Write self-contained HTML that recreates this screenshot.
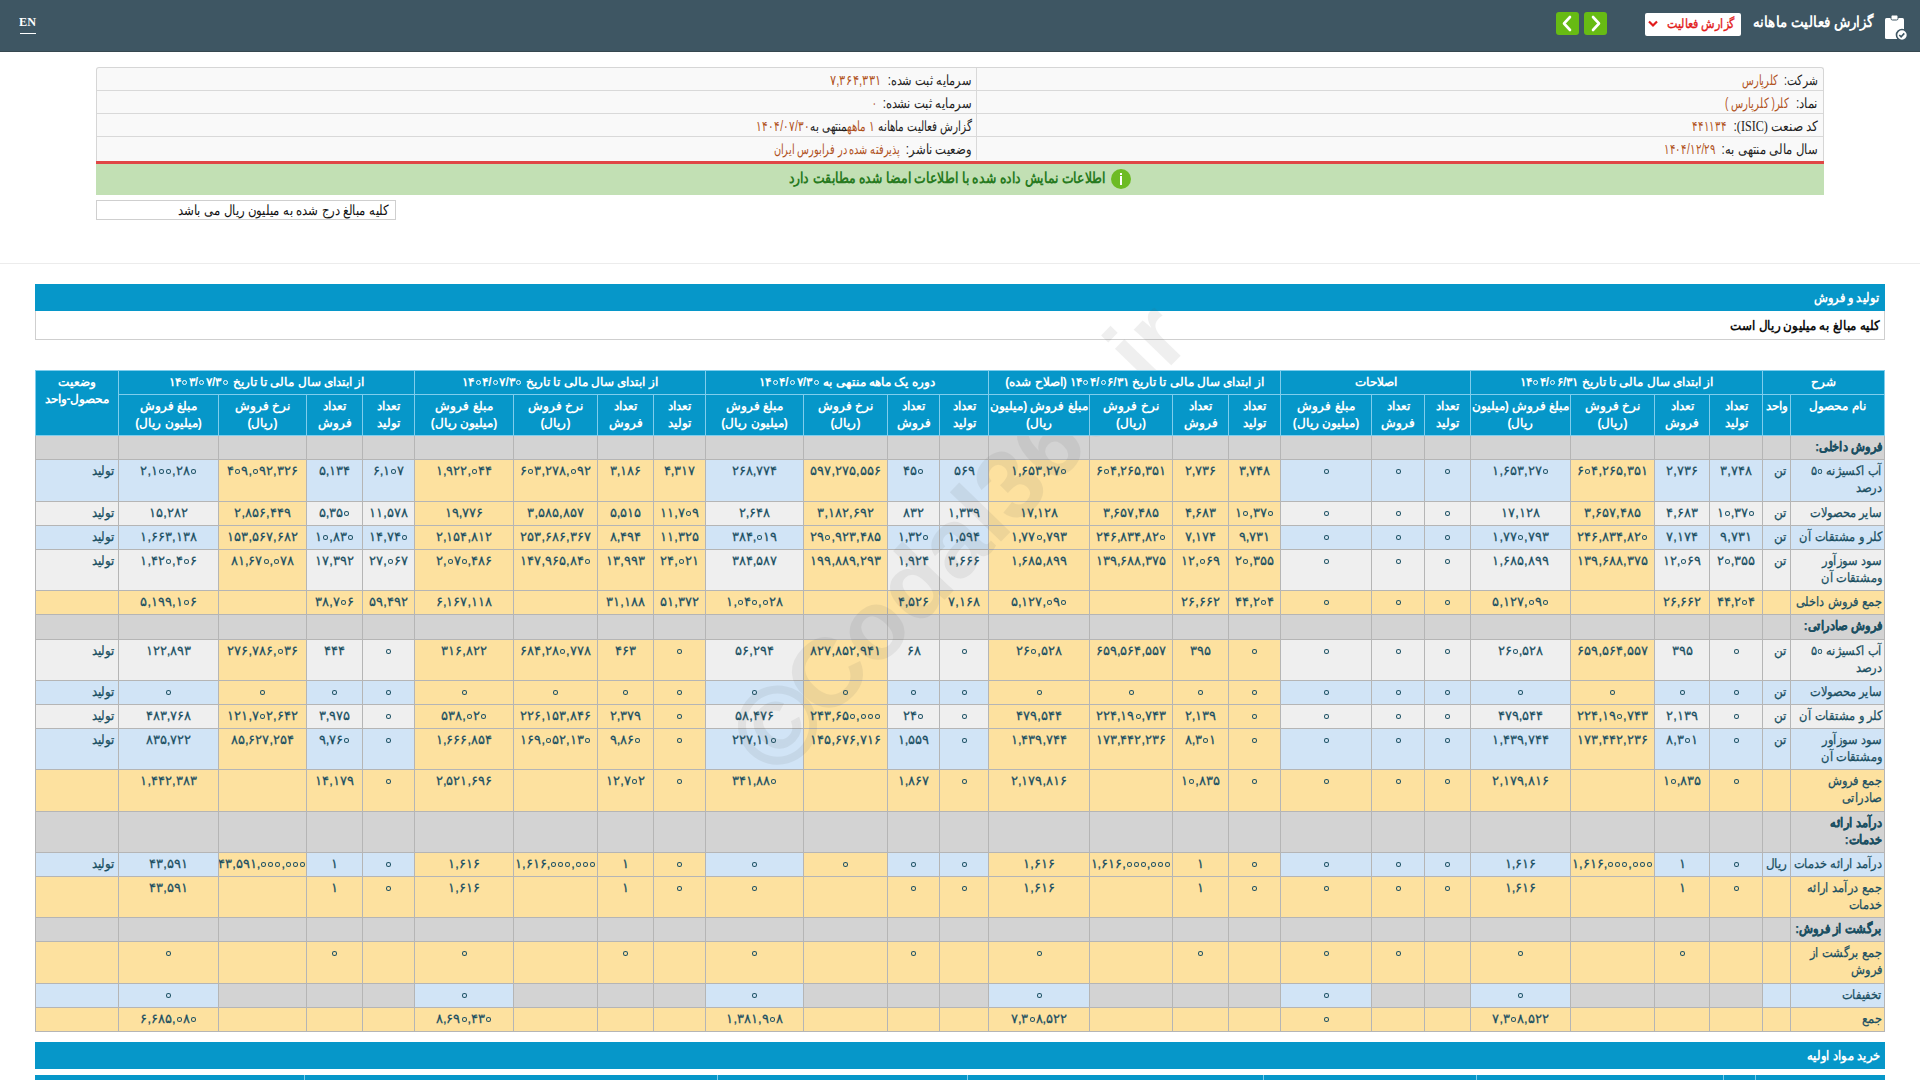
<!DOCTYPE html>
<html><head><meta charset="utf-8"><style>
html,body{margin:0;padding:0}
body{width:1920px;height:1080px;overflow:hidden;position:relative;background:#fff;font-family:"Liberation Sans",sans-serif;}
div{position:absolute;box-sizing:border-box}
#tb div{border:1px solid #b5b5b5}
.t{position:absolute;left:0;right:0;top:2px;line-height:17px;font-size:13px;color:#1a4f62;text-align:center;direction:rtl;white-space:nowrap;letter-spacing:0.4px;-webkit-text-stroke:0.25px #1a4f62}
.z{display:inline-block;box-sizing:border-box;width:5px;height:4.5px;border:1.4px solid #1a4f62;border-radius:50%;vertical-align:1.5px;margin:0 1px}
.n{direction:ltr;unicode-bidi:isolate;display:inline-block}
.nm{text-align:right;right:2px;left:-20px;letter-spacing:0;transform-origin:100% 0;transform:scaleX(0.88)}
.st{text-align:right;right:3px;transform-origin:100% 0;transform:scaleX(0.9)}
.b{font-weight:bold}
.un{text-align:right;right:3px;left:-5px;letter-spacing:0;transform-origin:100% 0;transform:scaleX(0.92)}
.zw{border-color:#fff;border-width:1.6px;width:5px;height:5px;margin:0 1.5px;vertical-align:1px}
#hd div{border:1px solid #7fcdec;background:#0697c9}
.h{position:absolute;left:0;right:0;color:#fff;font-weight:bold;font-size:12px;line-height:17px;text-align:center;direction:rtl}
</style></head><body>

<div style="left:0;top:0;width:1920px;height:52px;background:#3e5663;border-bottom:1px solid #364850"></div>
<div style="right:1884px;top:14px;font-size:13px;font-weight:bold;color:#fff;line-height:16px;white-space:nowrap;font-family:'Liberation Serif',serif;transform-origin:100% 50%;transform:scaleX(0.9392);"><span id="en">EN</span></div>
<div style="left:20px;top:33px;width:16px;height:1px;background:#fff"></div>
<div style="right:47px;top:12px;font-size:15px;font-weight:bold;color:#fff;line-height:20px;white-space:nowrap;direction:rtl;transform-origin:100% 50%;transform:scaleX(0.8935);"><span id="title">گزارش فعالیت ماهانه</span></div>
<svg style="position:absolute;left:1883px;top:13px" width="26" height="28" viewBox="0 0 26 28">
<rect x="2" y="5" width="19" height="21" rx="1.5" fill="#fff"/>
<rect x="8" y="2" width="7" height="5" rx="1.5" fill="#fff" stroke="#3e5663" stroke-width="1"/>
<circle cx="19" cy="22" r="5.5" fill="#fff" stroke="#3e5663" stroke-width="1.6"/>
<path d="M16.3 22 l1.8 1.8 l3.2 -3.4" fill="none" stroke="#3e5663" stroke-width="1.6"/>
</svg>
<div style="left:1645px;top:13px;width:96px;height:23px;background:#fff;border-radius:2px"></div>
<div style="right:185px;top:15px;font-size:13px;font-weight:normal;color:#e21b1b;line-height:18px;white-space:nowrap;direction:rtl;transform-origin:100% 50%;transform:scaleX(0.8543);-webkit-text-stroke:0.35px #e21b1b"><span id="sel">گزارش فعالیت</span></div>
<svg style="position:absolute;left:1648px;top:20px" width="10" height="8" viewBox="0 0 10 8"><path d="M1 1.5 L5 5.5 L9 1.5" fill="none" stroke="#e21b1b" stroke-width="2.2"/></svg>
<svg style="position:absolute;left:1556px;top:12px" width="23" height="23" viewBox="0 0 23 23"><rect width="23" height="23" rx="3" fill="#67bb14"/><path d="M14 5 L8 11.5 L14 18" fill="none" stroke="#fff" stroke-width="2.6" stroke-linecap="round" stroke-linejoin="round"/></svg>
<svg style="position:absolute;left:1584px;top:12px" width="23" height="23" viewBox="0 0 23 23"><rect width="23" height="23" rx="3" fill="#67bb14"/><path d="M9 5 L15 11.5 L9 18" fill="none" stroke="#fff" stroke-width="2.6" stroke-linecap="round" stroke-linejoin="round"/></svg>
<div style="left:96px;top:67px;width:1728px;height:94px;background:#f9f9f9;border:1px solid #d6d6d6;border-bottom:none;border-radius:3px 3px 0 0"></div>
<div style="left:97px;top:90px;width:1726px;height:1px;background:#d9d9d9"></div>
<div style="left:97px;top:113px;width:1726px;height:1px;background:#d9d9d9"></div>
<div style="left:97px;top:136px;width:1726px;height:1px;background:#d9d9d9"></div>
<div style="left:976px;top:68px;width:1px;height:92px;background:#d9d9d9"></div>
<div style="right:102px;top:70px;font-size:14px;font-weight:normal;color:#222;line-height:20px;white-space:nowrap;direction:rtl;transform-origin:100% 50%;transform:scaleX(0.7572);"><span id="r0l">شرکت:</span></div>
<div style="right:142px;top:70px;font-size:14px;font-weight:normal;color:#b0521c;line-height:20px;white-space:nowrap;direction:rtl;transform-origin:100% 50%;transform:scaleX(0.6923);"><span id="r0v">کلرپارس</span></div>
<div style="right:102px;top:93px;font-size:14px;font-weight:normal;color:#222;line-height:20px;white-space:nowrap;direction:rtl;transform-origin:100% 50%;transform:scaleX(0.8494);"><span id="r1l">نماد:</span></div>
<div style="right:131px;top:93px;font-size:14px;font-weight:normal;color:#b0521c;line-height:20px;white-space:nowrap;direction:rtl;transform-origin:100% 50%;transform:scaleX(0.7183);"><span id="r1v">کلر( کلرپارس )</span></div>
<div style="right:102px;top:116px;font-size:14px;font-weight:normal;color:#222;line-height:20px;white-space:nowrap;direction:rtl;transform-origin:100% 50%;transform:scaleX(0.8629);"><span id="r2l">کد صنعت <span style="font-family:Liberation Serif,serif">(ISIC)</span>:</span></div>
<div style="right:193px;top:116px;font-size:14px;font-weight:normal;color:#b0521c;line-height:20px;white-space:nowrap;direction:rtl;transform-origin:100% 50%;transform:scaleX(0.7292);"><span id="r2v">۴۴۱۱۳۴</span></div>
<div style="right:102px;top:139px;font-size:14px;font-weight:normal;color:#222;line-height:20px;white-space:nowrap;direction:rtl;transform-origin:100% 50%;transform:scaleX(0.8304);"><span id="r3l">سال مالی منتهی به:</span></div>
<div style="right:204px;top:139px;font-size:14px;font-weight:normal;color:#b0521c;line-height:20px;white-space:nowrap;direction:rtl;transform-origin:100% 50%;transform:scaleX(0.7242);"><span id="r3v">۱۴۰۴/۱۲/۲۹</span></div>
<div style="right:948px;top:70px;font-size:14px;font-weight:normal;color:#222;line-height:20px;white-space:nowrap;direction:rtl;transform-origin:100% 50%;transform:scaleX(0.8100);"><span id="l0l">سرمایه ثبت شده:</span></div>
<div style="right:1038px;top:70px;font-size:14px;font-weight:normal;color:#b0521c;line-height:20px;white-space:nowrap;direction:rtl;transform-origin:100% 50%;transform:scaleX(0.8150);"><span id="l0v">۷,۳۶۴,۳۳۱</span></div>
<div style="right:948px;top:93px;font-size:14px;font-weight:normal;color:#222;line-height:20px;white-space:nowrap;direction:rtl;transform-origin:100% 50%;transform:scaleX(0.8264);"><span id="l1l">سرمایه ثبت نشده:</span></div>
<div style="right:1043px;top:93px;font-size:14px;font-weight:normal;color:#b0521c;line-height:20px;white-space:nowrap;direction:rtl;transform-origin:100% 50%;transform:scaleX(0.6250);"><span id="l1v">۰</span></div>
<div style="right:948px;top:139px;font-size:14px;font-weight:normal;color:#222;line-height:20px;white-space:nowrap;direction:rtl;transform-origin:100% 50%;transform:scaleX(0.8271);"><span id="l3l">وضعیت ناشر:</span></div>
<div style="right:1020px;top:139px;font-size:14px;font-weight:normal;color:#b0521c;line-height:20px;white-space:nowrap;direction:rtl;transform-origin:100% 50%;transform:scaleX(0.6977);"><span id="l3v">پذیرفته شده در فرابورس ایران</span></div>
<div style="right:948px;top:116px;font-size:14px;font-weight:normal;color:#222;line-height:20px;white-space:nowrap;direction:rtl;transform-origin:100% 50%;transform:scaleX(0.7495);"><span id="l2">گزارش فعالیت ماهانه <span style="color:#b0521c">۱ ماهه</span>منتهی به<span style="color:#b0521c">۱۴۰۴/۰۷/۳۰</span></span></div>
<div style="left:96px;top:161px;width:1728px;height:3px;background:#e04646"></div>
<div style="left:96px;top:164px;width:1728px;height:31px;background:#c2e0b4"></div>
<div style="left:1111px;top:169px;width:20px;height:20px;border-radius:50%;background:#6dbb24"></div>
<div style="left:1120px;top:173px;width:2px;height:2px;background:#fff"></div><div style="left:1120px;top:176px;width:2px;height:9px;background:#fff"></div>
<div style="right:814px;top:168px;font-size:15px;font-weight:bold;color:#277a20;line-height:20px;white-space:nowrap;direction:rtl;transform-origin:100% 50%;transform:scaleX(0.8244);"><span id="msg">اطلاعات نمایش داده شده با اطلاعات امضا شده مطابقت دارد</span></div>
<div style="left:96px;top:200px;width:300px;height:20px;border:1px solid #cfcfcf;background:#fff"></div>
<div style="right:1531px;top:200px;font-size:14px;font-weight:normal;color:#111;line-height:20px;white-space:nowrap;direction:rtl;transform-origin:100% 50%;transform:scaleX(0.8370);"><span id="unit">کلیه مبالغ درج شده به میلیون ریال می باشد</span></div>
<div style="left:0;top:263px;width:1920px;height:1px;background:#ececec"></div>
<div style="left:35px;top:284px;width:1850px;height:27px;background:#0697c9"></div>
<div style="right:41px;top:289px;font-size:13px;font-weight:bold;color:#fff;line-height:17px;white-space:nowrap;direction:rtl;transform-origin:100% 50%;transform:scaleX(0.8760);"><span id="sec1">تولید و فروش</span></div>
<div style="left:35px;top:311px;width:1850px;height:29px;border:1px solid #cfcfcf;border-top:none;background:#fff"></div>
<div style="right:41px;top:317px;font-size:13px;font-weight:bold;color:#111;line-height:17px;white-space:nowrap;direction:rtl;transform-origin:100% 50%;transform:scaleX(0.9135);"><span id="sec1b">کلیه مبالغ به میلیون ریال است</span></div>
<div id="hd" style="z-index:3">
<div style="left:1762px;top:370px;width:123px;height:25px;"><span class="h" style="top:3px">شرح</span></div>
<div style="left:1470px;top:370px;width:293px;height:25px;"><span class="h" style="top:3px">از ابتدای سال مالی تا تاریخ <b class="n">۱۴<i class="z zw"></i>۴/<i class="z zw"></i>۶/۳۱</b></span></div>
<div style="left:1280px;top:370px;width:191px;height:25px;"><span class="h" style="top:3px">اصلاحات</span></div>
<div style="left:988px;top:370px;width:293px;height:25px;"><span class="h" style="top:3px">از ابتدای سال مالی تا تاریخ <b class="n">۱۴<i class="z zw"></i>۴/<i class="z zw"></i>۶/۳۱</b> (اصلاح شده)</span></div>
<div style="left:705px;top:370px;width:284px;height:25px;"><span class="h" style="top:3px">دوره یک ماهه منتهی به <b class="n">۱۴<i class="z zw"></i>۴/<i class="z zw"></i>۷/۳<i class="z zw"></i></b></span></div>
<div style="left:414px;top:370px;width:292px;height:25px;"><span class="h" style="top:3px">از ابتدای سال مالی تا تاریخ <b class="n">۱۴<i class="z zw"></i>۴/<i class="z zw"></i>۷/۳<i class="z zw"></i></b></span></div>
<div style="left:118px;top:370px;width:297px;height:25px;"><span class="h" style="top:3px">از ابتدای سال مالی تا تاریخ <b class="n">۱۴<i class="z zw"></i>۳/<i class="z zw"></i>۷/۳<i class="z zw"></i></b></span></div>
<div style="left:35px;top:370px;width:84px;height:66px;"><span class="h" style="top:3px">وضعیت<br>محصول-واحد</span></div>
<div style="left:1790px;top:394px;width:95px;height:42px;"><span class="h" style="top:3px">نام محصول</span></div>
<div style="left:1762px;top:394px;width:29px;height:42px;"><span class="h" style="top:3px">واحد</span></div>
<div style="left:1709px;top:394px;width:54px;height:42px;"><span class="h" style="top:3px">تعداد<br>تولید</span></div>
<div style="left:1654px;top:394px;width:56px;height:42px;"><span class="h" style="top:3px">تعداد<br>فروش</span></div>
<div style="left:1570px;top:394px;width:85px;height:42px;"><span class="h" style="top:3px">نرخ فروش<br>(ریال)</span></div>
<div style="left:1470px;top:394px;width:101px;height:42px;"><span class="h" style="top:3px">مبلغ فروش (میلیون<br>ریال)</span></div>
<div style="left:1424px;top:394px;width:47px;height:42px;"><span class="h" style="top:3px">تعداد<br>تولید</span></div>
<div style="left:1371px;top:394px;width:54px;height:42px;"><span class="h" style="top:3px">تعداد<br>فروش</span></div>
<div style="left:1280px;top:394px;width:92px;height:42px;"><span class="h" style="top:3px">مبلغ فروش<br>(میلیون ریال)</span></div>
<div style="left:1228px;top:394px;width:53px;height:42px;"><span class="h" style="top:3px">تعداد<br>تولید</span></div>
<div style="left:1172px;top:394px;width:57px;height:42px;"><span class="h" style="top:3px">تعداد<br>فروش</span></div>
<div style="left:1089px;top:394px;width:84px;height:42px;"><span class="h" style="top:3px">نرخ فروش<br>(ریال)</span></div>
<div style="left:988px;top:394px;width:102px;height:42px;"><span class="h" style="top:3px">مبلغ فروش (میلیون<br>ریال)</span></div>
<div style="left:939px;top:394px;width:50px;height:42px;"><span class="h" style="top:3px">تعداد<br>تولید</span></div>
<div style="left:887px;top:394px;width:53px;height:42px;"><span class="h" style="top:3px">تعداد<br>فروش</span></div>
<div style="left:803px;top:394px;width:85px;height:42px;"><span class="h" style="top:3px">نرخ فروش<br>(ریال)</span></div>
<div style="left:705px;top:394px;width:99px;height:42px;"><span class="h" style="top:3px">مبلغ فروش<br>(میلیون ریال)</span></div>
<div style="left:653px;top:394px;width:53px;height:42px;"><span class="h" style="top:3px">تعداد<br>تولید</span></div>
<div style="left:597px;top:394px;width:57px;height:42px;"><span class="h" style="top:3px">تعداد<br>فروش</span></div>
<div style="left:513px;top:394px;width:85px;height:42px;"><span class="h" style="top:3px">نرخ فروش<br>(ریال)</span></div>
<div style="left:414px;top:394px;width:100px;height:42px;"><span class="h" style="top:3px">مبلغ فروش<br>(میلیون ریال)</span></div>
<div style="left:362px;top:394px;width:53px;height:42px;"><span class="h" style="top:3px">تعداد<br>تولید</span></div>
<div style="left:306px;top:394px;width:57px;height:42px;"><span class="h" style="top:3px">تعداد<br>فروش</span></div>
<div style="left:218px;top:394px;width:89px;height:42px;"><span class="h" style="top:3px">نرخ فروش<br>(ریال)</span></div>
<div style="left:118px;top:394px;width:101px;height:42px;"><span class="h" style="top:3px">مبلغ فروش<br>(میلیون ریال)</span></div>
</div>
<div id="tb">
<div style="left:1790px;top:435px;width:95px;height:25px;background:#d3d3d3"><span class="t c nm b">فروش داخلی:</span></div>
<div style="left:1762px;top:435px;width:29px;height:25px;background:#d3d3d3"></div>
<div style="left:1709px;top:435px;width:54px;height:25px;background:#d3d3d3"></div>
<div style="left:1654px;top:435px;width:56px;height:25px;background:#d3d3d3"></div>
<div style="left:1570px;top:435px;width:85px;height:25px;background:#d3d3d3"></div>
<div style="left:1470px;top:435px;width:101px;height:25px;background:#d3d3d3"></div>
<div style="left:1424px;top:435px;width:47px;height:25px;background:#d3d3d3"></div>
<div style="left:1371px;top:435px;width:54px;height:25px;background:#d3d3d3"></div>
<div style="left:1280px;top:435px;width:92px;height:25px;background:#d3d3d3"></div>
<div style="left:1228px;top:435px;width:53px;height:25px;background:#d3d3d3"></div>
<div style="left:1172px;top:435px;width:57px;height:25px;background:#d3d3d3"></div>
<div style="left:1089px;top:435px;width:84px;height:25px;background:#d3d3d3"></div>
<div style="left:988px;top:435px;width:102px;height:25px;background:#d3d3d3"></div>
<div style="left:939px;top:435px;width:50px;height:25px;background:#d3d3d3"></div>
<div style="left:887px;top:435px;width:53px;height:25px;background:#d3d3d3"></div>
<div style="left:803px;top:435px;width:85px;height:25px;background:#d3d3d3"></div>
<div style="left:705px;top:435px;width:99px;height:25px;background:#d3d3d3"></div>
<div style="left:653px;top:435px;width:53px;height:25px;background:#d3d3d3"></div>
<div style="left:597px;top:435px;width:57px;height:25px;background:#d3d3d3"></div>
<div style="left:513px;top:435px;width:85px;height:25px;background:#d3d3d3"></div>
<div style="left:414px;top:435px;width:100px;height:25px;background:#d3d3d3"></div>
<div style="left:362px;top:435px;width:53px;height:25px;background:#d3d3d3"></div>
<div style="left:306px;top:435px;width:57px;height:25px;background:#d3d3d3"></div>
<div style="left:218px;top:435px;width:89px;height:25px;background:#d3d3d3"></div>
<div style="left:118px;top:435px;width:101px;height:25px;background:#d3d3d3"></div>
<div style="left:35px;top:435px;width:84px;height:25px;background:#d3d3d3"></div>
<div style="left:1790px;top:459px;width:95px;height:43px;background:#d1e4f6"><span class="t c nm">آب اکسیژنه <b class="n" style="font-weight:inherit">۵<i class="z"></i></b><br>درصد</span></div>
<div style="left:1762px;top:459px;width:29px;height:43px;background:#d1e4f6"><span class="t c un">تن</span></div>
<div style="left:1709px;top:459px;width:54px;height:43px;background:#d1e4f6"><span class="t c"><b class="n" style="font-weight:normal">۳,۷۴۸</b></span></div>
<div style="left:1654px;top:459px;width:56px;height:43px;background:#d1e4f6"><span class="t c"><b class="n" style="font-weight:normal">۲,۷۳۶</b></span></div>
<div style="left:1570px;top:459px;width:85px;height:43px;background:#fde19f"><span class="t c"><b class="n" style="font-weight:normal">۶<i class="z"></i>۴,۲۶۵,۳۵۱</b></span></div>
<div style="left:1470px;top:459px;width:101px;height:43px;background:#d1e4f6"><span class="t c"><b class="n" style="font-weight:normal">۱,۶۵۳,۲۷<i class="z"></i></b></span></div>
<div style="left:1424px;top:459px;width:47px;height:43px;background:#d1e4f6"><span class="t c"><b class="n" style="font-weight:normal"><i class="z"></i></b></span></div>
<div style="left:1371px;top:459px;width:54px;height:43px;background:#d1e4f6"><span class="t c"><b class="n" style="font-weight:normal"><i class="z"></i></b></span></div>
<div style="left:1280px;top:459px;width:92px;height:43px;background:#d1e4f6"><span class="t c"><b class="n" style="font-weight:normal"><i class="z"></i></b></span></div>
<div style="left:1228px;top:459px;width:53px;height:43px;background:#fde19f"><span class="t c"><b class="n" style="font-weight:normal">۳,۷۴۸</b></span></div>
<div style="left:1172px;top:459px;width:57px;height:43px;background:#fde19f"><span class="t c"><b class="n" style="font-weight:normal">۲,۷۳۶</b></span></div>
<div style="left:1089px;top:459px;width:84px;height:43px;background:#fde19f"><span class="t c"><b class="n" style="font-weight:normal">۶<i class="z"></i>۴,۲۶۵,۳۵۱</b></span></div>
<div style="left:988px;top:459px;width:102px;height:43px;background:#fde19f"><span class="t c"><b class="n" style="font-weight:normal">۱,۶۵۳,۲۷<i class="z"></i></b></span></div>
<div style="left:939px;top:459px;width:50px;height:43px;background:#d1e4f6"><span class="t c"><b class="n" style="font-weight:normal">۵۶۹</b></span></div>
<div style="left:887px;top:459px;width:53px;height:43px;background:#d1e4f6"><span class="t c"><b class="n" style="font-weight:normal">۴۵<i class="z"></i></b></span></div>
<div style="left:803px;top:459px;width:85px;height:43px;background:#fde19f"><span class="t c"><b class="n" style="font-weight:normal">۵۹۷,۲۷۵,۵۵۶</b></span></div>
<div style="left:705px;top:459px;width:99px;height:43px;background:#d1e4f6"><span class="t c"><b class="n" style="font-weight:normal">۲۶۸,۷۷۴</b></span></div>
<div style="left:653px;top:459px;width:53px;height:43px;background:#fde19f"><span class="t c"><b class="n" style="font-weight:normal">۴,۳۱۷</b></span></div>
<div style="left:597px;top:459px;width:57px;height:43px;background:#fde19f"><span class="t c"><b class="n" style="font-weight:normal">۳,۱۸۶</b></span></div>
<div style="left:513px;top:459px;width:85px;height:43px;background:#fde19f"><span class="t c"><b class="n" style="font-weight:normal">۶<i class="z"></i>۳,۲۷۸,<i class="z"></i>۹۲</b></span></div>
<div style="left:414px;top:459px;width:100px;height:43px;background:#fde19f"><span class="t c"><b class="n" style="font-weight:normal">۱,۹۲۲,<i class="z"></i>۴۴</b></span></div>
<div style="left:362px;top:459px;width:53px;height:43px;background:#d1e4f6"><span class="t c"><b class="n" style="font-weight:normal">۶,۱<i class="z"></i>۷</b></span></div>
<div style="left:306px;top:459px;width:57px;height:43px;background:#d1e4f6"><span class="t c"><b class="n" style="font-weight:normal">۵,۱۳۴</b></span></div>
<div style="left:218px;top:459px;width:89px;height:43px;background:#fde19f"><span class="t c"><b class="n" style="font-weight:normal">۴<i class="z"></i>۹,<i class="z"></i>۹۲,۳۲۶</b></span></div>
<div style="left:118px;top:459px;width:101px;height:43px;background:#d1e4f6"><span class="t c"><b class="n" style="font-weight:normal">۲,۱<i class="z"></i><i class="z"></i>,۲۸<i class="z"></i></b></span></div>
<div style="left:35px;top:459px;width:84px;height:43px;background:#d1e4f6"><span class="t c st">تولید</span></div>
<div style="left:1790px;top:501px;width:95px;height:25px;background:#efefef"><span class="t c nm">سایر محصولات</span></div>
<div style="left:1762px;top:501px;width:29px;height:25px;background:#efefef"><span class="t c un">تن</span></div>
<div style="left:1709px;top:501px;width:54px;height:25px;background:#efefef"><span class="t c"><b class="n" style="font-weight:normal">۱<i class="z"></i>,۳۷<i class="z"></i></b></span></div>
<div style="left:1654px;top:501px;width:56px;height:25px;background:#efefef"><span class="t c"><b class="n" style="font-weight:normal">۴,۶۸۳</b></span></div>
<div style="left:1570px;top:501px;width:85px;height:25px;background:#fde19f"><span class="t c"><b class="n" style="font-weight:normal">۳,۶۵۷,۴۸۵</b></span></div>
<div style="left:1470px;top:501px;width:101px;height:25px;background:#efefef"><span class="t c"><b class="n" style="font-weight:normal">۱۷,۱۲۸</b></span></div>
<div style="left:1424px;top:501px;width:47px;height:25px;background:#efefef"><span class="t c"><b class="n" style="font-weight:normal"><i class="z"></i></b></span></div>
<div style="left:1371px;top:501px;width:54px;height:25px;background:#efefef"><span class="t c"><b class="n" style="font-weight:normal"><i class="z"></i></b></span></div>
<div style="left:1280px;top:501px;width:92px;height:25px;background:#efefef"><span class="t c"><b class="n" style="font-weight:normal"><i class="z"></i></b></span></div>
<div style="left:1228px;top:501px;width:53px;height:25px;background:#fde19f"><span class="t c"><b class="n" style="font-weight:normal">۱<i class="z"></i>,۳۷<i class="z"></i></b></span></div>
<div style="left:1172px;top:501px;width:57px;height:25px;background:#fde19f"><span class="t c"><b class="n" style="font-weight:normal">۴,۶۸۳</b></span></div>
<div style="left:1089px;top:501px;width:84px;height:25px;background:#fde19f"><span class="t c"><b class="n" style="font-weight:normal">۳,۶۵۷,۴۸۵</b></span></div>
<div style="left:988px;top:501px;width:102px;height:25px;background:#fde19f"><span class="t c"><b class="n" style="font-weight:normal">۱۷,۱۲۸</b></span></div>
<div style="left:939px;top:501px;width:50px;height:25px;background:#efefef"><span class="t c"><b class="n" style="font-weight:normal">۱,۳۳۹</b></span></div>
<div style="left:887px;top:501px;width:53px;height:25px;background:#efefef"><span class="t c"><b class="n" style="font-weight:normal">۸۳۲</b></span></div>
<div style="left:803px;top:501px;width:85px;height:25px;background:#fde19f"><span class="t c"><b class="n" style="font-weight:normal">۳,۱۸۲,۶۹۲</b></span></div>
<div style="left:705px;top:501px;width:99px;height:25px;background:#efefef"><span class="t c"><b class="n" style="font-weight:normal">۲,۶۴۸</b></span></div>
<div style="left:653px;top:501px;width:53px;height:25px;background:#fde19f"><span class="t c"><b class="n" style="font-weight:normal">۱۱,۷<i class="z"></i>۹</b></span></div>
<div style="left:597px;top:501px;width:57px;height:25px;background:#fde19f"><span class="t c"><b class="n" style="font-weight:normal">۵,۵۱۵</b></span></div>
<div style="left:513px;top:501px;width:85px;height:25px;background:#fde19f"><span class="t c"><b class="n" style="font-weight:normal">۳,۵۸۵,۸۵۷</b></span></div>
<div style="left:414px;top:501px;width:100px;height:25px;background:#fde19f"><span class="t c"><b class="n" style="font-weight:normal">۱۹,۷۷۶</b></span></div>
<div style="left:362px;top:501px;width:53px;height:25px;background:#efefef"><span class="t c"><b class="n" style="font-weight:normal">۱۱,۵۷۸</b></span></div>
<div style="left:306px;top:501px;width:57px;height:25px;background:#efefef"><span class="t c"><b class="n" style="font-weight:normal">۵,۳۵<i class="z"></i></b></span></div>
<div style="left:218px;top:501px;width:89px;height:25px;background:#fde19f"><span class="t c"><b class="n" style="font-weight:normal">۲,۸۵۶,۴۴۹</b></span></div>
<div style="left:118px;top:501px;width:101px;height:25px;background:#efefef"><span class="t c"><b class="n" style="font-weight:normal">۱۵,۲۸۲</b></span></div>
<div style="left:35px;top:501px;width:84px;height:25px;background:#efefef"><span class="t c st">تولید</span></div>
<div style="left:1790px;top:525px;width:95px;height:25px;background:#d1e4f6"><span class="t c nm">کلر و مشتقات آن</span></div>
<div style="left:1762px;top:525px;width:29px;height:25px;background:#d1e4f6"><span class="t c un">تن</span></div>
<div style="left:1709px;top:525px;width:54px;height:25px;background:#d1e4f6"><span class="t c"><b class="n" style="font-weight:normal">۹,۷۳۱</b></span></div>
<div style="left:1654px;top:525px;width:56px;height:25px;background:#d1e4f6"><span class="t c"><b class="n" style="font-weight:normal">۷,۱۷۴</b></span></div>
<div style="left:1570px;top:525px;width:85px;height:25px;background:#fde19f"><span class="t c"><b class="n" style="font-weight:normal">۲۴۶,۸۳۴,۸۲<i class="z"></i></b></span></div>
<div style="left:1470px;top:525px;width:101px;height:25px;background:#d1e4f6"><span class="t c"><b class="n" style="font-weight:normal">۱,۷۷<i class="z"></i>,۷۹۳</b></span></div>
<div style="left:1424px;top:525px;width:47px;height:25px;background:#d1e4f6"><span class="t c"><b class="n" style="font-weight:normal"><i class="z"></i></b></span></div>
<div style="left:1371px;top:525px;width:54px;height:25px;background:#d1e4f6"><span class="t c"><b class="n" style="font-weight:normal"><i class="z"></i></b></span></div>
<div style="left:1280px;top:525px;width:92px;height:25px;background:#d1e4f6"><span class="t c"><b class="n" style="font-weight:normal"><i class="z"></i></b></span></div>
<div style="left:1228px;top:525px;width:53px;height:25px;background:#fde19f"><span class="t c"><b class="n" style="font-weight:normal">۹,۷۳۱</b></span></div>
<div style="left:1172px;top:525px;width:57px;height:25px;background:#fde19f"><span class="t c"><b class="n" style="font-weight:normal">۷,۱۷۴</b></span></div>
<div style="left:1089px;top:525px;width:84px;height:25px;background:#fde19f"><span class="t c"><b class="n" style="font-weight:normal">۲۴۶,۸۳۴,۸۲<i class="z"></i></b></span></div>
<div style="left:988px;top:525px;width:102px;height:25px;background:#fde19f"><span class="t c"><b class="n" style="font-weight:normal">۱,۷۷<i class="z"></i>,۷۹۳</b></span></div>
<div style="left:939px;top:525px;width:50px;height:25px;background:#d1e4f6"><span class="t c"><b class="n" style="font-weight:normal">۱,۵۹۴</b></span></div>
<div style="left:887px;top:525px;width:53px;height:25px;background:#d1e4f6"><span class="t c"><b class="n" style="font-weight:normal">۱,۳۲<i class="z"></i></b></span></div>
<div style="left:803px;top:525px;width:85px;height:25px;background:#fde19f"><span class="t c"><b class="n" style="font-weight:normal">۲۹<i class="z"></i>,۹۲۳,۴۸۵</b></span></div>
<div style="left:705px;top:525px;width:99px;height:25px;background:#d1e4f6"><span class="t c"><b class="n" style="font-weight:normal">۳۸۴,<i class="z"></i>۱۹</b></span></div>
<div style="left:653px;top:525px;width:53px;height:25px;background:#fde19f"><span class="t c"><b class="n" style="font-weight:normal">۱۱,۳۲۵</b></span></div>
<div style="left:597px;top:525px;width:57px;height:25px;background:#fde19f"><span class="t c"><b class="n" style="font-weight:normal">۸,۴۹۴</b></span></div>
<div style="left:513px;top:525px;width:85px;height:25px;background:#fde19f"><span class="t c"><b class="n" style="font-weight:normal">۲۵۳,۶۸۶,۳۶۷</b></span></div>
<div style="left:414px;top:525px;width:100px;height:25px;background:#fde19f"><span class="t c"><b class="n" style="font-weight:normal">۲,۱۵۴,۸۱۲</b></span></div>
<div style="left:362px;top:525px;width:53px;height:25px;background:#d1e4f6"><span class="t c"><b class="n" style="font-weight:normal">۱۴,۷۴<i class="z"></i></b></span></div>
<div style="left:306px;top:525px;width:57px;height:25px;background:#d1e4f6"><span class="t c"><b class="n" style="font-weight:normal">۱<i class="z"></i>,۸۳<i class="z"></i></b></span></div>
<div style="left:218px;top:525px;width:89px;height:25px;background:#fde19f"><span class="t c"><b class="n" style="font-weight:normal">۱۵۳,۵۶۷,۶۸۲</b></span></div>
<div style="left:118px;top:525px;width:101px;height:25px;background:#d1e4f6"><span class="t c"><b class="n" style="font-weight:normal">۱,۶۶۳,۱۳۸</b></span></div>
<div style="left:35px;top:525px;width:84px;height:25px;background:#d1e4f6"><span class="t c st">تولید</span></div>
<div style="left:1790px;top:549px;width:95px;height:42px;background:#efefef"><span class="t c nm">سود سوزآور<br>ومشتقات آن</span></div>
<div style="left:1762px;top:549px;width:29px;height:42px;background:#efefef"><span class="t c un">تن</span></div>
<div style="left:1709px;top:549px;width:54px;height:42px;background:#efefef"><span class="t c"><b class="n" style="font-weight:normal">۲<i class="z"></i>,۳۵۵</b></span></div>
<div style="left:1654px;top:549px;width:56px;height:42px;background:#efefef"><span class="t c"><b class="n" style="font-weight:normal">۱۲,<i class="z"></i>۶۹</b></span></div>
<div style="left:1570px;top:549px;width:85px;height:42px;background:#fde19f"><span class="t c"><b class="n" style="font-weight:normal">۱۳۹,۶۸۸,۳۷۵</b></span></div>
<div style="left:1470px;top:549px;width:101px;height:42px;background:#efefef"><span class="t c"><b class="n" style="font-weight:normal">۱,۶۸۵,۸۹۹</b></span></div>
<div style="left:1424px;top:549px;width:47px;height:42px;background:#efefef"><span class="t c"><b class="n" style="font-weight:normal"><i class="z"></i></b></span></div>
<div style="left:1371px;top:549px;width:54px;height:42px;background:#efefef"><span class="t c"><b class="n" style="font-weight:normal"><i class="z"></i></b></span></div>
<div style="left:1280px;top:549px;width:92px;height:42px;background:#efefef"><span class="t c"><b class="n" style="font-weight:normal"><i class="z"></i></b></span></div>
<div style="left:1228px;top:549px;width:53px;height:42px;background:#fde19f"><span class="t c"><b class="n" style="font-weight:normal">۲<i class="z"></i>,۳۵۵</b></span></div>
<div style="left:1172px;top:549px;width:57px;height:42px;background:#fde19f"><span class="t c"><b class="n" style="font-weight:normal">۱۲,<i class="z"></i>۶۹</b></span></div>
<div style="left:1089px;top:549px;width:84px;height:42px;background:#fde19f"><span class="t c"><b class="n" style="font-weight:normal">۱۳۹,۶۸۸,۳۷۵</b></span></div>
<div style="left:988px;top:549px;width:102px;height:42px;background:#fde19f"><span class="t c"><b class="n" style="font-weight:normal">۱,۶۸۵,۸۹۹</b></span></div>
<div style="left:939px;top:549px;width:50px;height:42px;background:#efefef"><span class="t c"><b class="n" style="font-weight:normal">۳,۶۶۶</b></span></div>
<div style="left:887px;top:549px;width:53px;height:42px;background:#efefef"><span class="t c"><b class="n" style="font-weight:normal">۱,۹۲۴</b></span></div>
<div style="left:803px;top:549px;width:85px;height:42px;background:#fde19f"><span class="t c"><b class="n" style="font-weight:normal">۱۹۹,۸۸۹,۲۹۳</b></span></div>
<div style="left:705px;top:549px;width:99px;height:42px;background:#efefef"><span class="t c"><b class="n" style="font-weight:normal">۳۸۴,۵۸۷</b></span></div>
<div style="left:653px;top:549px;width:53px;height:42px;background:#fde19f"><span class="t c"><b class="n" style="font-weight:normal">۲۴,<i class="z"></i>۲۱</b></span></div>
<div style="left:597px;top:549px;width:57px;height:42px;background:#fde19f"><span class="t c"><b class="n" style="font-weight:normal">۱۳,۹۹۳</b></span></div>
<div style="left:513px;top:549px;width:85px;height:42px;background:#fde19f"><span class="t c"><b class="n" style="font-weight:normal">۱۴۷,۹۶۵,۸۴<i class="z"></i></b></span></div>
<div style="left:414px;top:549px;width:100px;height:42px;background:#fde19f"><span class="t c"><b class="n" style="font-weight:normal">۲,<i class="z"></i>۷<i class="z"></i>,۴۸۶</b></span></div>
<div style="left:362px;top:549px;width:53px;height:42px;background:#efefef"><span class="t c"><b class="n" style="font-weight:normal">۲۷,<i class="z"></i>۶۷</b></span></div>
<div style="left:306px;top:549px;width:57px;height:42px;background:#efefef"><span class="t c"><b class="n" style="font-weight:normal">۱۷,۳۹۲</b></span></div>
<div style="left:218px;top:549px;width:89px;height:42px;background:#fde19f"><span class="t c"><b class="n" style="font-weight:normal">۸۱,۶۷<i class="z"></i>,<i class="z"></i>۷۸</b></span></div>
<div style="left:118px;top:549px;width:101px;height:42px;background:#efefef"><span class="t c"><b class="n" style="font-weight:normal">۱,۴۲<i class="z"></i>,۴<i class="z"></i>۶</b></span></div>
<div style="left:35px;top:549px;width:84px;height:42px;background:#efefef"><span class="t c st">تولید</span></div>
<div style="left:1790px;top:590px;width:95px;height:25px;background:#fde19f"><span class="t c nm">جمع فروش داخلی</span></div>
<div style="left:1762px;top:590px;width:29px;height:25px;background:#fde19f"></div>
<div style="left:1709px;top:590px;width:54px;height:25px;background:#fde19f"><span class="t c"><b class="n" style="font-weight:normal">۴۴,۲<i class="z"></i>۴</b></span></div>
<div style="left:1654px;top:590px;width:56px;height:25px;background:#fde19f"><span class="t c"><b class="n" style="font-weight:normal">۲۶,۶۶۲</b></span></div>
<div style="left:1570px;top:590px;width:85px;height:25px;background:#fde19f"></div>
<div style="left:1470px;top:590px;width:101px;height:25px;background:#fde19f"><span class="t c"><b class="n" style="font-weight:normal">۵,۱۲۷,<i class="z"></i>۹<i class="z"></i></b></span></div>
<div style="left:1424px;top:590px;width:47px;height:25px;background:#fde19f"><span class="t c"><b class="n" style="font-weight:normal"><i class="z"></i></b></span></div>
<div style="left:1371px;top:590px;width:54px;height:25px;background:#fde19f"><span class="t c"><b class="n" style="font-weight:normal"><i class="z"></i></b></span></div>
<div style="left:1280px;top:590px;width:92px;height:25px;background:#fde19f"><span class="t c"><b class="n" style="font-weight:normal"><i class="z"></i></b></span></div>
<div style="left:1228px;top:590px;width:53px;height:25px;background:#fde19f"><span class="t c"><b class="n" style="font-weight:normal">۴۴,۲<i class="z"></i>۴</b></span></div>
<div style="left:1172px;top:590px;width:57px;height:25px;background:#fde19f"><span class="t c"><b class="n" style="font-weight:normal">۲۶,۶۶۲</b></span></div>
<div style="left:1089px;top:590px;width:84px;height:25px;background:#fde19f"></div>
<div style="left:988px;top:590px;width:102px;height:25px;background:#fde19f"><span class="t c"><b class="n" style="font-weight:normal">۵,۱۲۷,<i class="z"></i>۹<i class="z"></i></b></span></div>
<div style="left:939px;top:590px;width:50px;height:25px;background:#fde19f"><span class="t c"><b class="n" style="font-weight:normal">۷,۱۶۸</b></span></div>
<div style="left:887px;top:590px;width:53px;height:25px;background:#fde19f"><span class="t c"><b class="n" style="font-weight:normal">۴,۵۲۶</b></span></div>
<div style="left:803px;top:590px;width:85px;height:25px;background:#fde19f"></div>
<div style="left:705px;top:590px;width:99px;height:25px;background:#fde19f"><span class="t c"><b class="n" style="font-weight:normal">۱,<i class="z"></i>۴<i class="z"></i>,<i class="z"></i>۲۸</b></span></div>
<div style="left:653px;top:590px;width:53px;height:25px;background:#fde19f"><span class="t c"><b class="n" style="font-weight:normal">۵۱,۳۷۲</b></span></div>
<div style="left:597px;top:590px;width:57px;height:25px;background:#fde19f"><span class="t c"><b class="n" style="font-weight:normal">۳۱,۱۸۸</b></span></div>
<div style="left:513px;top:590px;width:85px;height:25px;background:#fde19f"></div>
<div style="left:414px;top:590px;width:100px;height:25px;background:#fde19f"><span class="t c"><b class="n" style="font-weight:normal">۶,۱۶۷,۱۱۸</b></span></div>
<div style="left:362px;top:590px;width:53px;height:25px;background:#fde19f"><span class="t c"><b class="n" style="font-weight:normal">۵۹,۴۹۲</b></span></div>
<div style="left:306px;top:590px;width:57px;height:25px;background:#fde19f"><span class="t c"><b class="n" style="font-weight:normal">۳۸,۷<i class="z"></i>۶</b></span></div>
<div style="left:218px;top:590px;width:89px;height:25px;background:#fde19f"></div>
<div style="left:118px;top:590px;width:101px;height:25px;background:#fde19f"><span class="t c"><b class="n" style="font-weight:normal">۵,۱۹۹,۱<i class="z"></i>۶</b></span></div>
<div style="left:35px;top:590px;width:84px;height:25px;background:#fde19f"></div>
<div style="left:1790px;top:614px;width:95px;height:26px;background:#d3d3d3"><span class="t c nm b">فروش صادراتی:</span></div>
<div style="left:1762px;top:614px;width:29px;height:26px;background:#d3d3d3"></div>
<div style="left:1709px;top:614px;width:54px;height:26px;background:#d3d3d3"></div>
<div style="left:1654px;top:614px;width:56px;height:26px;background:#d3d3d3"></div>
<div style="left:1570px;top:614px;width:85px;height:26px;background:#d3d3d3"></div>
<div style="left:1470px;top:614px;width:101px;height:26px;background:#d3d3d3"></div>
<div style="left:1424px;top:614px;width:47px;height:26px;background:#d3d3d3"></div>
<div style="left:1371px;top:614px;width:54px;height:26px;background:#d3d3d3"></div>
<div style="left:1280px;top:614px;width:92px;height:26px;background:#d3d3d3"></div>
<div style="left:1228px;top:614px;width:53px;height:26px;background:#d3d3d3"></div>
<div style="left:1172px;top:614px;width:57px;height:26px;background:#d3d3d3"></div>
<div style="left:1089px;top:614px;width:84px;height:26px;background:#d3d3d3"></div>
<div style="left:988px;top:614px;width:102px;height:26px;background:#d3d3d3"></div>
<div style="left:939px;top:614px;width:50px;height:26px;background:#d3d3d3"></div>
<div style="left:887px;top:614px;width:53px;height:26px;background:#d3d3d3"></div>
<div style="left:803px;top:614px;width:85px;height:26px;background:#d3d3d3"></div>
<div style="left:705px;top:614px;width:99px;height:26px;background:#d3d3d3"></div>
<div style="left:653px;top:614px;width:53px;height:26px;background:#d3d3d3"></div>
<div style="left:597px;top:614px;width:57px;height:26px;background:#d3d3d3"></div>
<div style="left:513px;top:614px;width:85px;height:26px;background:#d3d3d3"></div>
<div style="left:414px;top:614px;width:100px;height:26px;background:#d3d3d3"></div>
<div style="left:362px;top:614px;width:53px;height:26px;background:#d3d3d3"></div>
<div style="left:306px;top:614px;width:57px;height:26px;background:#d3d3d3"></div>
<div style="left:218px;top:614px;width:89px;height:26px;background:#d3d3d3"></div>
<div style="left:118px;top:614px;width:101px;height:26px;background:#d3d3d3"></div>
<div style="left:35px;top:614px;width:84px;height:26px;background:#d3d3d3"></div>
<div style="left:1790px;top:639px;width:95px;height:42px;background:#efefef"><span class="t c nm">آب اکسیژنه <b class="n" style="font-weight:inherit">۵<i class="z"></i></b><br>درصد</span></div>
<div style="left:1762px;top:639px;width:29px;height:42px;background:#efefef"><span class="t c un">تن</span></div>
<div style="left:1709px;top:639px;width:54px;height:42px;background:#efefef"><span class="t c"><b class="n" style="font-weight:normal"><i class="z"></i></b></span></div>
<div style="left:1654px;top:639px;width:56px;height:42px;background:#efefef"><span class="t c"><b class="n" style="font-weight:normal">۳۹۵</b></span></div>
<div style="left:1570px;top:639px;width:85px;height:42px;background:#fde19f"><span class="t c"><b class="n" style="font-weight:normal">۶۵۹,۵۶۴,۵۵۷</b></span></div>
<div style="left:1470px;top:639px;width:101px;height:42px;background:#efefef"><span class="t c"><b class="n" style="font-weight:normal">۲۶<i class="z"></i>,۵۲۸</b></span></div>
<div style="left:1424px;top:639px;width:47px;height:42px;background:#efefef"><span class="t c"><b class="n" style="font-weight:normal"><i class="z"></i></b></span></div>
<div style="left:1371px;top:639px;width:54px;height:42px;background:#efefef"><span class="t c"><b class="n" style="font-weight:normal"><i class="z"></i></b></span></div>
<div style="left:1280px;top:639px;width:92px;height:42px;background:#efefef"><span class="t c"><b class="n" style="font-weight:normal"><i class="z"></i></b></span></div>
<div style="left:1228px;top:639px;width:53px;height:42px;background:#fde19f"><span class="t c"><b class="n" style="font-weight:normal"><i class="z"></i></b></span></div>
<div style="left:1172px;top:639px;width:57px;height:42px;background:#fde19f"><span class="t c"><b class="n" style="font-weight:normal">۳۹۵</b></span></div>
<div style="left:1089px;top:639px;width:84px;height:42px;background:#fde19f"><span class="t c"><b class="n" style="font-weight:normal">۶۵۹,۵۶۴,۵۵۷</b></span></div>
<div style="left:988px;top:639px;width:102px;height:42px;background:#fde19f"><span class="t c"><b class="n" style="font-weight:normal">۲۶<i class="z"></i>,۵۲۸</b></span></div>
<div style="left:939px;top:639px;width:50px;height:42px;background:#efefef"><span class="t c"><b class="n" style="font-weight:normal"><i class="z"></i></b></span></div>
<div style="left:887px;top:639px;width:53px;height:42px;background:#efefef"><span class="t c"><b class="n" style="font-weight:normal">۶۸</b></span></div>
<div style="left:803px;top:639px;width:85px;height:42px;background:#fde19f"><span class="t c"><b class="n" style="font-weight:normal">۸۲۷,۸۵۲,۹۴۱</b></span></div>
<div style="left:705px;top:639px;width:99px;height:42px;background:#efefef"><span class="t c"><b class="n" style="font-weight:normal">۵۶,۲۹۴</b></span></div>
<div style="left:653px;top:639px;width:53px;height:42px;background:#fde19f"><span class="t c"><b class="n" style="font-weight:normal"><i class="z"></i></b></span></div>
<div style="left:597px;top:639px;width:57px;height:42px;background:#fde19f"><span class="t c"><b class="n" style="font-weight:normal">۴۶۳</b></span></div>
<div style="left:513px;top:639px;width:85px;height:42px;background:#fde19f"><span class="t c"><b class="n" style="font-weight:normal">۶۸۴,۲۸<i class="z"></i>,۷۷۸</b></span></div>
<div style="left:414px;top:639px;width:100px;height:42px;background:#fde19f"><span class="t c"><b class="n" style="font-weight:normal">۳۱۶,۸۲۲</b></span></div>
<div style="left:362px;top:639px;width:53px;height:42px;background:#efefef"><span class="t c"><b class="n" style="font-weight:normal"><i class="z"></i></b></span></div>
<div style="left:306px;top:639px;width:57px;height:42px;background:#efefef"><span class="t c"><b class="n" style="font-weight:normal">۴۴۴</b></span></div>
<div style="left:218px;top:639px;width:89px;height:42px;background:#fde19f"><span class="t c"><b class="n" style="font-weight:normal">۲۷۶,۷۸۶,<i class="z"></i>۳۶</b></span></div>
<div style="left:118px;top:639px;width:101px;height:42px;background:#efefef"><span class="t c"><b class="n" style="font-weight:normal">۱۲۲,۸۹۳</b></span></div>
<div style="left:35px;top:639px;width:84px;height:42px;background:#efefef"><span class="t c st">تولید</span></div>
<div style="left:1790px;top:680px;width:95px;height:25px;background:#d1e4f6"><span class="t c nm">سایر محصولات</span></div>
<div style="left:1762px;top:680px;width:29px;height:25px;background:#d1e4f6"><span class="t c un">تن</span></div>
<div style="left:1709px;top:680px;width:54px;height:25px;background:#d1e4f6"><span class="t c"><b class="n" style="font-weight:normal"><i class="z"></i></b></span></div>
<div style="left:1654px;top:680px;width:56px;height:25px;background:#d1e4f6"><span class="t c"><b class="n" style="font-weight:normal"><i class="z"></i></b></span></div>
<div style="left:1570px;top:680px;width:85px;height:25px;background:#fde19f"><span class="t c"><b class="n" style="font-weight:normal"><i class="z"></i></b></span></div>
<div style="left:1470px;top:680px;width:101px;height:25px;background:#d1e4f6"><span class="t c"><b class="n" style="font-weight:normal"><i class="z"></i></b></span></div>
<div style="left:1424px;top:680px;width:47px;height:25px;background:#d1e4f6"><span class="t c"><b class="n" style="font-weight:normal"><i class="z"></i></b></span></div>
<div style="left:1371px;top:680px;width:54px;height:25px;background:#d1e4f6"><span class="t c"><b class="n" style="font-weight:normal"><i class="z"></i></b></span></div>
<div style="left:1280px;top:680px;width:92px;height:25px;background:#d1e4f6"><span class="t c"><b class="n" style="font-weight:normal"><i class="z"></i></b></span></div>
<div style="left:1228px;top:680px;width:53px;height:25px;background:#fde19f"><span class="t c"><b class="n" style="font-weight:normal"><i class="z"></i></b></span></div>
<div style="left:1172px;top:680px;width:57px;height:25px;background:#fde19f"><span class="t c"><b class="n" style="font-weight:normal"><i class="z"></i></b></span></div>
<div style="left:1089px;top:680px;width:84px;height:25px;background:#fde19f"><span class="t c"><b class="n" style="font-weight:normal"><i class="z"></i></b></span></div>
<div style="left:988px;top:680px;width:102px;height:25px;background:#fde19f"><span class="t c"><b class="n" style="font-weight:normal"><i class="z"></i></b></span></div>
<div style="left:939px;top:680px;width:50px;height:25px;background:#d1e4f6"><span class="t c"><b class="n" style="font-weight:normal"><i class="z"></i></b></span></div>
<div style="left:887px;top:680px;width:53px;height:25px;background:#d1e4f6"><span class="t c"><b class="n" style="font-weight:normal"><i class="z"></i></b></span></div>
<div style="left:803px;top:680px;width:85px;height:25px;background:#fde19f"><span class="t c"><b class="n" style="font-weight:normal"><i class="z"></i></b></span></div>
<div style="left:705px;top:680px;width:99px;height:25px;background:#d1e4f6"><span class="t c"><b class="n" style="font-weight:normal"><i class="z"></i></b></span></div>
<div style="left:653px;top:680px;width:53px;height:25px;background:#fde19f"><span class="t c"><b class="n" style="font-weight:normal"><i class="z"></i></b></span></div>
<div style="left:597px;top:680px;width:57px;height:25px;background:#fde19f"><span class="t c"><b class="n" style="font-weight:normal"><i class="z"></i></b></span></div>
<div style="left:513px;top:680px;width:85px;height:25px;background:#fde19f"><span class="t c"><b class="n" style="font-weight:normal"><i class="z"></i></b></span></div>
<div style="left:414px;top:680px;width:100px;height:25px;background:#fde19f"><span class="t c"><b class="n" style="font-weight:normal"><i class="z"></i></b></span></div>
<div style="left:362px;top:680px;width:53px;height:25px;background:#d1e4f6"><span class="t c"><b class="n" style="font-weight:normal"><i class="z"></i></b></span></div>
<div style="left:306px;top:680px;width:57px;height:25px;background:#d1e4f6"><span class="t c"><b class="n" style="font-weight:normal"><i class="z"></i></b></span></div>
<div style="left:218px;top:680px;width:89px;height:25px;background:#fde19f"><span class="t c"><b class="n" style="font-weight:normal"><i class="z"></i></b></span></div>
<div style="left:118px;top:680px;width:101px;height:25px;background:#d1e4f6"><span class="t c"><b class="n" style="font-weight:normal"><i class="z"></i></b></span></div>
<div style="left:35px;top:680px;width:84px;height:25px;background:#d1e4f6"><span class="t c st">تولید</span></div>
<div style="left:1790px;top:704px;width:95px;height:25px;background:#efefef"><span class="t c nm">کلر و مشتقات آن</span></div>
<div style="left:1762px;top:704px;width:29px;height:25px;background:#efefef"><span class="t c un">تن</span></div>
<div style="left:1709px;top:704px;width:54px;height:25px;background:#efefef"><span class="t c"><b class="n" style="font-weight:normal"><i class="z"></i></b></span></div>
<div style="left:1654px;top:704px;width:56px;height:25px;background:#efefef"><span class="t c"><b class="n" style="font-weight:normal">۲,۱۳۹</b></span></div>
<div style="left:1570px;top:704px;width:85px;height:25px;background:#fde19f"><span class="t c"><b class="n" style="font-weight:normal">۲۲۴,۱۹<i class="z"></i>,۷۴۳</b></span></div>
<div style="left:1470px;top:704px;width:101px;height:25px;background:#efefef"><span class="t c"><b class="n" style="font-weight:normal">۴۷۹,۵۴۴</b></span></div>
<div style="left:1424px;top:704px;width:47px;height:25px;background:#efefef"><span class="t c"><b class="n" style="font-weight:normal"><i class="z"></i></b></span></div>
<div style="left:1371px;top:704px;width:54px;height:25px;background:#efefef"><span class="t c"><b class="n" style="font-weight:normal"><i class="z"></i></b></span></div>
<div style="left:1280px;top:704px;width:92px;height:25px;background:#efefef"><span class="t c"><b class="n" style="font-weight:normal"><i class="z"></i></b></span></div>
<div style="left:1228px;top:704px;width:53px;height:25px;background:#fde19f"><span class="t c"><b class="n" style="font-weight:normal"><i class="z"></i></b></span></div>
<div style="left:1172px;top:704px;width:57px;height:25px;background:#fde19f"><span class="t c"><b class="n" style="font-weight:normal">۲,۱۳۹</b></span></div>
<div style="left:1089px;top:704px;width:84px;height:25px;background:#fde19f"><span class="t c"><b class="n" style="font-weight:normal">۲۲۴,۱۹<i class="z"></i>,۷۴۳</b></span></div>
<div style="left:988px;top:704px;width:102px;height:25px;background:#fde19f"><span class="t c"><b class="n" style="font-weight:normal">۴۷۹,۵۴۴</b></span></div>
<div style="left:939px;top:704px;width:50px;height:25px;background:#efefef"><span class="t c"><b class="n" style="font-weight:normal"><i class="z"></i></b></span></div>
<div style="left:887px;top:704px;width:53px;height:25px;background:#efefef"><span class="t c"><b class="n" style="font-weight:normal">۲۴<i class="z"></i></b></span></div>
<div style="left:803px;top:704px;width:85px;height:25px;background:#fde19f"><span class="t c"><b class="n" style="font-weight:normal">۲۴۳,۶۵<i class="z"></i>,<i class="z"></i><i class="z"></i><i class="z"></i></b></span></div>
<div style="left:705px;top:704px;width:99px;height:25px;background:#efefef"><span class="t c"><b class="n" style="font-weight:normal">۵۸,۴۷۶</b></span></div>
<div style="left:653px;top:704px;width:53px;height:25px;background:#fde19f"><span class="t c"><b class="n" style="font-weight:normal"><i class="z"></i></b></span></div>
<div style="left:597px;top:704px;width:57px;height:25px;background:#fde19f"><span class="t c"><b class="n" style="font-weight:normal">۲,۳۷۹</b></span></div>
<div style="left:513px;top:704px;width:85px;height:25px;background:#fde19f"><span class="t c"><b class="n" style="font-weight:normal">۲۲۶,۱۵۳,۸۴۶</b></span></div>
<div style="left:414px;top:704px;width:100px;height:25px;background:#fde19f"><span class="t c"><b class="n" style="font-weight:normal">۵۳۸,<i class="z"></i>۲<i class="z"></i></b></span></div>
<div style="left:362px;top:704px;width:53px;height:25px;background:#efefef"><span class="t c"><b class="n" style="font-weight:normal"><i class="z"></i></b></span></div>
<div style="left:306px;top:704px;width:57px;height:25px;background:#efefef"><span class="t c"><b class="n" style="font-weight:normal">۳,۹۷۵</b></span></div>
<div style="left:218px;top:704px;width:89px;height:25px;background:#fde19f"><span class="t c"><b class="n" style="font-weight:normal">۱۲۱,۷<i class="z"></i>۲,۶۴۲</b></span></div>
<div style="left:118px;top:704px;width:101px;height:25px;background:#efefef"><span class="t c"><b class="n" style="font-weight:normal">۴۸۳,۷۶۸</b></span></div>
<div style="left:35px;top:704px;width:84px;height:25px;background:#efefef"><span class="t c st">تولید</span></div>
<div style="left:1790px;top:728px;width:95px;height:42px;background:#d1e4f6"><span class="t c nm">سود سوزآور<br>ومشتقات آن</span></div>
<div style="left:1762px;top:728px;width:29px;height:42px;background:#d1e4f6"><span class="t c un">تن</span></div>
<div style="left:1709px;top:728px;width:54px;height:42px;background:#d1e4f6"><span class="t c"><b class="n" style="font-weight:normal"><i class="z"></i></b></span></div>
<div style="left:1654px;top:728px;width:56px;height:42px;background:#d1e4f6"><span class="t c"><b class="n" style="font-weight:normal">۸,۳<i class="z"></i>۱</b></span></div>
<div style="left:1570px;top:728px;width:85px;height:42px;background:#fde19f"><span class="t c"><b class="n" style="font-weight:normal">۱۷۳,۴۴۲,۲۳۶</b></span></div>
<div style="left:1470px;top:728px;width:101px;height:42px;background:#d1e4f6"><span class="t c"><b class="n" style="font-weight:normal">۱,۴۳۹,۷۴۴</b></span></div>
<div style="left:1424px;top:728px;width:47px;height:42px;background:#d1e4f6"><span class="t c"><b class="n" style="font-weight:normal"><i class="z"></i></b></span></div>
<div style="left:1371px;top:728px;width:54px;height:42px;background:#d1e4f6"><span class="t c"><b class="n" style="font-weight:normal"><i class="z"></i></b></span></div>
<div style="left:1280px;top:728px;width:92px;height:42px;background:#d1e4f6"><span class="t c"><b class="n" style="font-weight:normal"><i class="z"></i></b></span></div>
<div style="left:1228px;top:728px;width:53px;height:42px;background:#fde19f"><span class="t c"><b class="n" style="font-weight:normal"><i class="z"></i></b></span></div>
<div style="left:1172px;top:728px;width:57px;height:42px;background:#fde19f"><span class="t c"><b class="n" style="font-weight:normal">۸,۳<i class="z"></i>۱</b></span></div>
<div style="left:1089px;top:728px;width:84px;height:42px;background:#fde19f"><span class="t c"><b class="n" style="font-weight:normal">۱۷۳,۴۴۲,۲۳۶</b></span></div>
<div style="left:988px;top:728px;width:102px;height:42px;background:#fde19f"><span class="t c"><b class="n" style="font-weight:normal">۱,۴۳۹,۷۴۴</b></span></div>
<div style="left:939px;top:728px;width:50px;height:42px;background:#d1e4f6"><span class="t c"><b class="n" style="font-weight:normal"><i class="z"></i></b></span></div>
<div style="left:887px;top:728px;width:53px;height:42px;background:#d1e4f6"><span class="t c"><b class="n" style="font-weight:normal">۱,۵۵۹</b></span></div>
<div style="left:803px;top:728px;width:85px;height:42px;background:#fde19f"><span class="t c"><b class="n" style="font-weight:normal">۱۴۵,۶۷۶,۷۱۶</b></span></div>
<div style="left:705px;top:728px;width:99px;height:42px;background:#d1e4f6"><span class="t c"><b class="n" style="font-weight:normal">۲۲۷,۱۱<i class="z"></i></b></span></div>
<div style="left:653px;top:728px;width:53px;height:42px;background:#fde19f"><span class="t c"><b class="n" style="font-weight:normal"><i class="z"></i></b></span></div>
<div style="left:597px;top:728px;width:57px;height:42px;background:#fde19f"><span class="t c"><b class="n" style="font-weight:normal">۹,۸۶<i class="z"></i></b></span></div>
<div style="left:513px;top:728px;width:85px;height:42px;background:#fde19f"><span class="t c"><b class="n" style="font-weight:normal">۱۶۹,<i class="z"></i>۵۲,۱۳<i class="z"></i></b></span></div>
<div style="left:414px;top:728px;width:100px;height:42px;background:#fde19f"><span class="t c"><b class="n" style="font-weight:normal">۱,۶۶۶,۸۵۴</b></span></div>
<div style="left:362px;top:728px;width:53px;height:42px;background:#d1e4f6"><span class="t c"><b class="n" style="font-weight:normal"><i class="z"></i></b></span></div>
<div style="left:306px;top:728px;width:57px;height:42px;background:#d1e4f6"><span class="t c"><b class="n" style="font-weight:normal">۹,۷۶<i class="z"></i></b></span></div>
<div style="left:218px;top:728px;width:89px;height:42px;background:#fde19f"><span class="t c"><b class="n" style="font-weight:normal">۸۵,۶۲۷,۲۵۴</b></span></div>
<div style="left:118px;top:728px;width:101px;height:42px;background:#d1e4f6"><span class="t c"><b class="n" style="font-weight:normal">۸۳۵,۷۲۲</b></span></div>
<div style="left:35px;top:728px;width:84px;height:42px;background:#d1e4f6"><span class="t c st">تولید</span></div>
<div style="left:1790px;top:769px;width:95px;height:43px;background:#fde19f"><span class="t c nm">جمع فروش<br>صادراتی</span></div>
<div style="left:1762px;top:769px;width:29px;height:43px;background:#fde19f"></div>
<div style="left:1709px;top:769px;width:54px;height:43px;background:#fde19f"><span class="t c"><b class="n" style="font-weight:normal"><i class="z"></i></b></span></div>
<div style="left:1654px;top:769px;width:56px;height:43px;background:#fde19f"><span class="t c"><b class="n" style="font-weight:normal">۱<i class="z"></i>,۸۳۵</b></span></div>
<div style="left:1570px;top:769px;width:85px;height:43px;background:#fde19f"></div>
<div style="left:1470px;top:769px;width:101px;height:43px;background:#fde19f"><span class="t c"><b class="n" style="font-weight:normal">۲,۱۷۹,۸۱۶</b></span></div>
<div style="left:1424px;top:769px;width:47px;height:43px;background:#fde19f"><span class="t c"><b class="n" style="font-weight:normal"><i class="z"></i></b></span></div>
<div style="left:1371px;top:769px;width:54px;height:43px;background:#fde19f"><span class="t c"><b class="n" style="font-weight:normal"><i class="z"></i></b></span></div>
<div style="left:1280px;top:769px;width:92px;height:43px;background:#fde19f"><span class="t c"><b class="n" style="font-weight:normal"><i class="z"></i></b></span></div>
<div style="left:1228px;top:769px;width:53px;height:43px;background:#fde19f"><span class="t c"><b class="n" style="font-weight:normal"><i class="z"></i></b></span></div>
<div style="left:1172px;top:769px;width:57px;height:43px;background:#fde19f"><span class="t c"><b class="n" style="font-weight:normal">۱<i class="z"></i>,۸۳۵</b></span></div>
<div style="left:1089px;top:769px;width:84px;height:43px;background:#fde19f"></div>
<div style="left:988px;top:769px;width:102px;height:43px;background:#fde19f"><span class="t c"><b class="n" style="font-weight:normal">۲,۱۷۹,۸۱۶</b></span></div>
<div style="left:939px;top:769px;width:50px;height:43px;background:#fde19f"><span class="t c"><b class="n" style="font-weight:normal"><i class="z"></i></b></span></div>
<div style="left:887px;top:769px;width:53px;height:43px;background:#fde19f"><span class="t c"><b class="n" style="font-weight:normal">۱,۸۶۷</b></span></div>
<div style="left:803px;top:769px;width:85px;height:43px;background:#fde19f"></div>
<div style="left:705px;top:769px;width:99px;height:43px;background:#fde19f"><span class="t c"><b class="n" style="font-weight:normal">۳۴۱,۸۸<i class="z"></i></b></span></div>
<div style="left:653px;top:769px;width:53px;height:43px;background:#fde19f"><span class="t c"><b class="n" style="font-weight:normal"><i class="z"></i></b></span></div>
<div style="left:597px;top:769px;width:57px;height:43px;background:#fde19f"><span class="t c"><b class="n" style="font-weight:normal">۱۲,۷<i class="z"></i>۲</b></span></div>
<div style="left:513px;top:769px;width:85px;height:43px;background:#fde19f"></div>
<div style="left:414px;top:769px;width:100px;height:43px;background:#fde19f"><span class="t c"><b class="n" style="font-weight:normal">۲,۵۲۱,۶۹۶</b></span></div>
<div style="left:362px;top:769px;width:53px;height:43px;background:#fde19f"><span class="t c"><b class="n" style="font-weight:normal"><i class="z"></i></b></span></div>
<div style="left:306px;top:769px;width:57px;height:43px;background:#fde19f"><span class="t c"><b class="n" style="font-weight:normal">۱۴,۱۷۹</b></span></div>
<div style="left:218px;top:769px;width:89px;height:43px;background:#fde19f"></div>
<div style="left:118px;top:769px;width:101px;height:43px;background:#fde19f"><span class="t c"><b class="n" style="font-weight:normal">۱,۴۴۲,۳۸۳</b></span></div>
<div style="left:35px;top:769px;width:84px;height:43px;background:#fde19f"></div>
<div style="left:1790px;top:811px;width:95px;height:42px;background:#d3d3d3"><span class="t c nm b">درآمد ارائه<br>خدمات:</span></div>
<div style="left:1762px;top:811px;width:29px;height:42px;background:#d3d3d3"></div>
<div style="left:1709px;top:811px;width:54px;height:42px;background:#d3d3d3"></div>
<div style="left:1654px;top:811px;width:56px;height:42px;background:#d3d3d3"></div>
<div style="left:1570px;top:811px;width:85px;height:42px;background:#d3d3d3"></div>
<div style="left:1470px;top:811px;width:101px;height:42px;background:#d3d3d3"></div>
<div style="left:1424px;top:811px;width:47px;height:42px;background:#d3d3d3"></div>
<div style="left:1371px;top:811px;width:54px;height:42px;background:#d3d3d3"></div>
<div style="left:1280px;top:811px;width:92px;height:42px;background:#d3d3d3"></div>
<div style="left:1228px;top:811px;width:53px;height:42px;background:#d3d3d3"></div>
<div style="left:1172px;top:811px;width:57px;height:42px;background:#d3d3d3"></div>
<div style="left:1089px;top:811px;width:84px;height:42px;background:#d3d3d3"></div>
<div style="left:988px;top:811px;width:102px;height:42px;background:#d3d3d3"></div>
<div style="left:939px;top:811px;width:50px;height:42px;background:#d3d3d3"></div>
<div style="left:887px;top:811px;width:53px;height:42px;background:#d3d3d3"></div>
<div style="left:803px;top:811px;width:85px;height:42px;background:#d3d3d3"></div>
<div style="left:705px;top:811px;width:99px;height:42px;background:#d3d3d3"></div>
<div style="left:653px;top:811px;width:53px;height:42px;background:#d3d3d3"></div>
<div style="left:597px;top:811px;width:57px;height:42px;background:#d3d3d3"></div>
<div style="left:513px;top:811px;width:85px;height:42px;background:#d3d3d3"></div>
<div style="left:414px;top:811px;width:100px;height:42px;background:#d3d3d3"></div>
<div style="left:362px;top:811px;width:53px;height:42px;background:#d3d3d3"></div>
<div style="left:306px;top:811px;width:57px;height:42px;background:#d3d3d3"></div>
<div style="left:218px;top:811px;width:89px;height:42px;background:#d3d3d3"></div>
<div style="left:118px;top:811px;width:101px;height:42px;background:#d3d3d3"></div>
<div style="left:35px;top:811px;width:84px;height:42px;background:#d3d3d3"></div>
<div style="left:1790px;top:852px;width:95px;height:25px;background:#d1e4f6"><span class="t c nm">درآمد ارائه خدمات</span></div>
<div style="left:1762px;top:852px;width:29px;height:25px;background:#d1e4f6"><span class="t c un">ریال</span></div>
<div style="left:1709px;top:852px;width:54px;height:25px;background:#d1e4f6"><span class="t c"><b class="n" style="font-weight:normal"><i class="z"></i></b></span></div>
<div style="left:1654px;top:852px;width:56px;height:25px;background:#d1e4f6"><span class="t c"><b class="n" style="font-weight:normal">۱</b></span></div>
<div style="left:1570px;top:852px;width:85px;height:25px;background:#fde19f"><span class="t c"><b class="n" style="font-weight:normal">۱,۶۱۶,<i class="z"></i><i class="z"></i><i class="z"></i>,<i class="z"></i><i class="z"></i><i class="z"></i></b></span></div>
<div style="left:1470px;top:852px;width:101px;height:25px;background:#d1e4f6"><span class="t c"><b class="n" style="font-weight:normal">۱,۶۱۶</b></span></div>
<div style="left:1424px;top:852px;width:47px;height:25px;background:#d1e4f6"><span class="t c"><b class="n" style="font-weight:normal"><i class="z"></i></b></span></div>
<div style="left:1371px;top:852px;width:54px;height:25px;background:#d1e4f6"><span class="t c"><b class="n" style="font-weight:normal"><i class="z"></i></b></span></div>
<div style="left:1280px;top:852px;width:92px;height:25px;background:#d1e4f6"><span class="t c"><b class="n" style="font-weight:normal"><i class="z"></i></b></span></div>
<div style="left:1228px;top:852px;width:53px;height:25px;background:#fde19f"><span class="t c"><b class="n" style="font-weight:normal"><i class="z"></i></b></span></div>
<div style="left:1172px;top:852px;width:57px;height:25px;background:#fde19f"><span class="t c"><b class="n" style="font-weight:normal">۱</b></span></div>
<div style="left:1089px;top:852px;width:84px;height:25px;background:#fde19f"><span class="t c"><b class="n" style="font-weight:normal">۱,۶۱۶,<i class="z"></i><i class="z"></i><i class="z"></i>,<i class="z"></i><i class="z"></i><i class="z"></i></b></span></div>
<div style="left:988px;top:852px;width:102px;height:25px;background:#fde19f"><span class="t c"><b class="n" style="font-weight:normal">۱,۶۱۶</b></span></div>
<div style="left:939px;top:852px;width:50px;height:25px;background:#d1e4f6"><span class="t c"><b class="n" style="font-weight:normal"><i class="z"></i></b></span></div>
<div style="left:887px;top:852px;width:53px;height:25px;background:#d1e4f6"><span class="t c"><b class="n" style="font-weight:normal"><i class="z"></i></b></span></div>
<div style="left:803px;top:852px;width:85px;height:25px;background:#fde19f"><span class="t c"><b class="n" style="font-weight:normal"><i class="z"></i></b></span></div>
<div style="left:705px;top:852px;width:99px;height:25px;background:#d1e4f6"><span class="t c"><b class="n" style="font-weight:normal"><i class="z"></i></b></span></div>
<div style="left:653px;top:852px;width:53px;height:25px;background:#fde19f"><span class="t c"><b class="n" style="font-weight:normal"><i class="z"></i></b></span></div>
<div style="left:597px;top:852px;width:57px;height:25px;background:#fde19f"><span class="t c"><b class="n" style="font-weight:normal">۱</b></span></div>
<div style="left:513px;top:852px;width:85px;height:25px;background:#fde19f"><span class="t c"><b class="n" style="font-weight:normal">۱,۶۱۶,<i class="z"></i><i class="z"></i><i class="z"></i>,<i class="z"></i><i class="z"></i><i class="z"></i></b></span></div>
<div style="left:414px;top:852px;width:100px;height:25px;background:#fde19f"><span class="t c"><b class="n" style="font-weight:normal">۱,۶۱۶</b></span></div>
<div style="left:362px;top:852px;width:53px;height:25px;background:#d1e4f6"><span class="t c"><b class="n" style="font-weight:normal"><i class="z"></i></b></span></div>
<div style="left:306px;top:852px;width:57px;height:25px;background:#d1e4f6"><span class="t c"><b class="n" style="font-weight:normal">۱</b></span></div>
<div style="left:218px;top:852px;width:89px;height:25px;background:#fde19f"><span class="t c"><b class="n" style="font-weight:normal">۴۳,۵۹۱,<i class="z"></i><i class="z"></i><i class="z"></i>,<i class="z"></i><i class="z"></i><i class="z"></i></b></span></div>
<div style="left:118px;top:852px;width:101px;height:25px;background:#d1e4f6"><span class="t c"><b class="n" style="font-weight:normal">۴۳,۵۹۱</b></span></div>
<div style="left:35px;top:852px;width:84px;height:25px;background:#d1e4f6"><span class="t c st">تولید</span></div>
<div style="left:1790px;top:876px;width:95px;height:42px;background:#fde19f"><span class="t c nm">جمع درآمد ارائه<br>خدمات</span></div>
<div style="left:1762px;top:876px;width:29px;height:42px;background:#fde19f"></div>
<div style="left:1709px;top:876px;width:54px;height:42px;background:#fde19f"><span class="t c"><b class="n" style="font-weight:normal"><i class="z"></i></b></span></div>
<div style="left:1654px;top:876px;width:56px;height:42px;background:#fde19f"><span class="t c"><b class="n" style="font-weight:normal">۱</b></span></div>
<div style="left:1570px;top:876px;width:85px;height:42px;background:#fde19f"></div>
<div style="left:1470px;top:876px;width:101px;height:42px;background:#fde19f"><span class="t c"><b class="n" style="font-weight:normal">۱,۶۱۶</b></span></div>
<div style="left:1424px;top:876px;width:47px;height:42px;background:#fde19f"><span class="t c"><b class="n" style="font-weight:normal"><i class="z"></i></b></span></div>
<div style="left:1371px;top:876px;width:54px;height:42px;background:#fde19f"><span class="t c"><b class="n" style="font-weight:normal"><i class="z"></i></b></span></div>
<div style="left:1280px;top:876px;width:92px;height:42px;background:#fde19f"><span class="t c"><b class="n" style="font-weight:normal"><i class="z"></i></b></span></div>
<div style="left:1228px;top:876px;width:53px;height:42px;background:#fde19f"><span class="t c"><b class="n" style="font-weight:normal"><i class="z"></i></b></span></div>
<div style="left:1172px;top:876px;width:57px;height:42px;background:#fde19f"><span class="t c"><b class="n" style="font-weight:normal">۱</b></span></div>
<div style="left:1089px;top:876px;width:84px;height:42px;background:#fde19f"></div>
<div style="left:988px;top:876px;width:102px;height:42px;background:#fde19f"><span class="t c"><b class="n" style="font-weight:normal">۱,۶۱۶</b></span></div>
<div style="left:939px;top:876px;width:50px;height:42px;background:#fde19f"><span class="t c"><b class="n" style="font-weight:normal"><i class="z"></i></b></span></div>
<div style="left:887px;top:876px;width:53px;height:42px;background:#fde19f"><span class="t c"><b class="n" style="font-weight:normal"><i class="z"></i></b></span></div>
<div style="left:803px;top:876px;width:85px;height:42px;background:#fde19f"></div>
<div style="left:705px;top:876px;width:99px;height:42px;background:#fde19f"><span class="t c"><b class="n" style="font-weight:normal"><i class="z"></i></b></span></div>
<div style="left:653px;top:876px;width:53px;height:42px;background:#fde19f"><span class="t c"><b class="n" style="font-weight:normal"><i class="z"></i></b></span></div>
<div style="left:597px;top:876px;width:57px;height:42px;background:#fde19f"><span class="t c"><b class="n" style="font-weight:normal">۱</b></span></div>
<div style="left:513px;top:876px;width:85px;height:42px;background:#fde19f"></div>
<div style="left:414px;top:876px;width:100px;height:42px;background:#fde19f"><span class="t c"><b class="n" style="font-weight:normal">۱,۶۱۶</b></span></div>
<div style="left:362px;top:876px;width:53px;height:42px;background:#fde19f"><span class="t c"><b class="n" style="font-weight:normal"><i class="z"></i></b></span></div>
<div style="left:306px;top:876px;width:57px;height:42px;background:#fde19f"><span class="t c"><b class="n" style="font-weight:normal">۱</b></span></div>
<div style="left:218px;top:876px;width:89px;height:42px;background:#fde19f"></div>
<div style="left:118px;top:876px;width:101px;height:42px;background:#fde19f"><span class="t c"><b class="n" style="font-weight:normal">۴۳,۵۹۱</b></span></div>
<div style="left:35px;top:876px;width:84px;height:42px;background:#fde19f"></div>
<div style="left:1790px;top:917px;width:95px;height:25px;background:#d3d3d3"><span class="t c nm b">برگشت از فروش:</span></div>
<div style="left:1762px;top:917px;width:29px;height:25px;background:#d3d3d3"></div>
<div style="left:1709px;top:917px;width:54px;height:25px;background:#d3d3d3"></div>
<div style="left:1654px;top:917px;width:56px;height:25px;background:#d3d3d3"></div>
<div style="left:1570px;top:917px;width:85px;height:25px;background:#d3d3d3"></div>
<div style="left:1470px;top:917px;width:101px;height:25px;background:#d3d3d3"></div>
<div style="left:1424px;top:917px;width:47px;height:25px;background:#d3d3d3"></div>
<div style="left:1371px;top:917px;width:54px;height:25px;background:#d3d3d3"></div>
<div style="left:1280px;top:917px;width:92px;height:25px;background:#d3d3d3"></div>
<div style="left:1228px;top:917px;width:53px;height:25px;background:#d3d3d3"></div>
<div style="left:1172px;top:917px;width:57px;height:25px;background:#d3d3d3"></div>
<div style="left:1089px;top:917px;width:84px;height:25px;background:#d3d3d3"></div>
<div style="left:988px;top:917px;width:102px;height:25px;background:#d3d3d3"></div>
<div style="left:939px;top:917px;width:50px;height:25px;background:#d3d3d3"></div>
<div style="left:887px;top:917px;width:53px;height:25px;background:#d3d3d3"></div>
<div style="left:803px;top:917px;width:85px;height:25px;background:#d3d3d3"></div>
<div style="left:705px;top:917px;width:99px;height:25px;background:#d3d3d3"></div>
<div style="left:653px;top:917px;width:53px;height:25px;background:#d3d3d3"></div>
<div style="left:597px;top:917px;width:57px;height:25px;background:#d3d3d3"></div>
<div style="left:513px;top:917px;width:85px;height:25px;background:#d3d3d3"></div>
<div style="left:414px;top:917px;width:100px;height:25px;background:#d3d3d3"></div>
<div style="left:362px;top:917px;width:53px;height:25px;background:#d3d3d3"></div>
<div style="left:306px;top:917px;width:57px;height:25px;background:#d3d3d3"></div>
<div style="left:218px;top:917px;width:89px;height:25px;background:#d3d3d3"></div>
<div style="left:118px;top:917px;width:101px;height:25px;background:#d3d3d3"></div>
<div style="left:35px;top:917px;width:84px;height:25px;background:#d3d3d3"></div>
<div style="left:1790px;top:941px;width:95px;height:43px;background:#fde19f"><span class="t c nm">جمع برگشت از<br>فروش</span></div>
<div style="left:1762px;top:941px;width:29px;height:43px;background:#fde19f"></div>
<div style="left:1709px;top:941px;width:54px;height:43px;background:#fde19f"></div>
<div style="left:1654px;top:941px;width:56px;height:43px;background:#fde19f"><span class="t c"><b class="n" style="font-weight:normal"><i class="z"></i></b></span></div>
<div style="left:1570px;top:941px;width:85px;height:43px;background:#fde19f"></div>
<div style="left:1470px;top:941px;width:101px;height:43px;background:#fde19f"><span class="t c"><b class="n" style="font-weight:normal"><i class="z"></i></b></span></div>
<div style="left:1424px;top:941px;width:47px;height:43px;background:#fde19f"></div>
<div style="left:1371px;top:941px;width:54px;height:43px;background:#fde19f"><span class="t c"><b class="n" style="font-weight:normal"><i class="z"></i></b></span></div>
<div style="left:1280px;top:941px;width:92px;height:43px;background:#fde19f"><span class="t c"><b class="n" style="font-weight:normal"><i class="z"></i></b></span></div>
<div style="left:1228px;top:941px;width:53px;height:43px;background:#fde19f"></div>
<div style="left:1172px;top:941px;width:57px;height:43px;background:#fde19f"><span class="t c"><b class="n" style="font-weight:normal"><i class="z"></i></b></span></div>
<div style="left:1089px;top:941px;width:84px;height:43px;background:#fde19f"></div>
<div style="left:988px;top:941px;width:102px;height:43px;background:#fde19f"><span class="t c"><b class="n" style="font-weight:normal"><i class="z"></i></b></span></div>
<div style="left:939px;top:941px;width:50px;height:43px;background:#fde19f"></div>
<div style="left:887px;top:941px;width:53px;height:43px;background:#fde19f"><span class="t c"><b class="n" style="font-weight:normal"><i class="z"></i></b></span></div>
<div style="left:803px;top:941px;width:85px;height:43px;background:#fde19f"></div>
<div style="left:705px;top:941px;width:99px;height:43px;background:#fde19f"><span class="t c"><b class="n" style="font-weight:normal"><i class="z"></i></b></span></div>
<div style="left:653px;top:941px;width:53px;height:43px;background:#fde19f"></div>
<div style="left:597px;top:941px;width:57px;height:43px;background:#fde19f"><span class="t c"><b class="n" style="font-weight:normal"><i class="z"></i></b></span></div>
<div style="left:513px;top:941px;width:85px;height:43px;background:#fde19f"></div>
<div style="left:414px;top:941px;width:100px;height:43px;background:#fde19f"><span class="t c"><b class="n" style="font-weight:normal"><i class="z"></i></b></span></div>
<div style="left:362px;top:941px;width:53px;height:43px;background:#fde19f"></div>
<div style="left:306px;top:941px;width:57px;height:43px;background:#fde19f"><span class="t c"><b class="n" style="font-weight:normal"><i class="z"></i></b></span></div>
<div style="left:218px;top:941px;width:89px;height:43px;background:#fde19f"></div>
<div style="left:118px;top:941px;width:101px;height:43px;background:#fde19f"><span class="t c"><b class="n" style="font-weight:normal"><i class="z"></i></b></span></div>
<div style="left:35px;top:941px;width:84px;height:43px;background:#fde19f"></div>
<div style="left:1790px;top:983px;width:95px;height:25px;background:#d1e4f6"><span class="t c nm">تخفیفات</span></div>
<div style="left:1762px;top:983px;width:29px;height:25px;background:#d1e4f6"></div>
<div style="left:1709px;top:983px;width:54px;height:25px;background:#d3d3d3"></div>
<div style="left:1654px;top:983px;width:56px;height:25px;background:#d3d3d3"></div>
<div style="left:1570px;top:983px;width:85px;height:25px;background:#d3d3d3"></div>
<div style="left:1470px;top:983px;width:101px;height:25px;background:#d1e4f6"><span class="t c"><b class="n" style="font-weight:normal"><i class="z"></i></b></span></div>
<div style="left:1424px;top:983px;width:47px;height:25px;background:#d3d3d3"></div>
<div style="left:1371px;top:983px;width:54px;height:25px;background:#d3d3d3"></div>
<div style="left:1280px;top:983px;width:92px;height:25px;background:#d1e4f6"><span class="t c"><b class="n" style="font-weight:normal"><i class="z"></i></b></span></div>
<div style="left:1228px;top:983px;width:53px;height:25px;background:#d3d3d3"></div>
<div style="left:1172px;top:983px;width:57px;height:25px;background:#d3d3d3"></div>
<div style="left:1089px;top:983px;width:84px;height:25px;background:#d3d3d3"></div>
<div style="left:988px;top:983px;width:102px;height:25px;background:#d1e4f6"><span class="t c"><b class="n" style="font-weight:normal"><i class="z"></i></b></span></div>
<div style="left:939px;top:983px;width:50px;height:25px;background:#d3d3d3"></div>
<div style="left:887px;top:983px;width:53px;height:25px;background:#d3d3d3"></div>
<div style="left:803px;top:983px;width:85px;height:25px;background:#d3d3d3"></div>
<div style="left:705px;top:983px;width:99px;height:25px;background:#d1e4f6"><span class="t c"><b class="n" style="font-weight:normal"><i class="z"></i></b></span></div>
<div style="left:653px;top:983px;width:53px;height:25px;background:#d3d3d3"></div>
<div style="left:597px;top:983px;width:57px;height:25px;background:#d3d3d3"></div>
<div style="left:513px;top:983px;width:85px;height:25px;background:#d3d3d3"></div>
<div style="left:414px;top:983px;width:100px;height:25px;background:#d1e4f6"><span class="t c"><b class="n" style="font-weight:normal"><i class="z"></i></b></span></div>
<div style="left:362px;top:983px;width:53px;height:25px;background:#d3d3d3"></div>
<div style="left:306px;top:983px;width:57px;height:25px;background:#d3d3d3"></div>
<div style="left:218px;top:983px;width:89px;height:25px;background:#d3d3d3"></div>
<div style="left:118px;top:983px;width:101px;height:25px;background:#d1e4f6"><span class="t c"><b class="n" style="font-weight:normal"><i class="z"></i></b></span></div>
<div style="left:35px;top:983px;width:84px;height:25px;background:#d1e4f6"></div>
<div style="left:1790px;top:1007px;width:95px;height:25px;background:#fde19f"><span class="t c nm">جمع</span></div>
<div style="left:1762px;top:1007px;width:29px;height:25px;background:#fde19f"></div>
<div style="left:1709px;top:1007px;width:54px;height:25px;background:#fde19f"></div>
<div style="left:1654px;top:1007px;width:56px;height:25px;background:#fde19f"></div>
<div style="left:1570px;top:1007px;width:85px;height:25px;background:#fde19f"></div>
<div style="left:1470px;top:1007px;width:101px;height:25px;background:#fde19f"><span class="t c"><b class="n" style="font-weight:normal">۷,۳<i class="z"></i>۸,۵۲۲</b></span></div>
<div style="left:1424px;top:1007px;width:47px;height:25px;background:#fde19f"></div>
<div style="left:1371px;top:1007px;width:54px;height:25px;background:#fde19f"></div>
<div style="left:1280px;top:1007px;width:92px;height:25px;background:#fde19f"><span class="t c"><b class="n" style="font-weight:normal"><i class="z"></i></b></span></div>
<div style="left:1228px;top:1007px;width:53px;height:25px;background:#fde19f"></div>
<div style="left:1172px;top:1007px;width:57px;height:25px;background:#fde19f"></div>
<div style="left:1089px;top:1007px;width:84px;height:25px;background:#fde19f"></div>
<div style="left:988px;top:1007px;width:102px;height:25px;background:#fde19f"><span class="t c"><b class="n" style="font-weight:normal">۷,۳<i class="z"></i>۸,۵۲۲</b></span></div>
<div style="left:939px;top:1007px;width:50px;height:25px;background:#fde19f"></div>
<div style="left:887px;top:1007px;width:53px;height:25px;background:#fde19f"></div>
<div style="left:803px;top:1007px;width:85px;height:25px;background:#fde19f"></div>
<div style="left:705px;top:1007px;width:99px;height:25px;background:#fde19f"><span class="t c"><b class="n" style="font-weight:normal">۱,۳۸۱,۹<i class="z"></i>۸</b></span></div>
<div style="left:653px;top:1007px;width:53px;height:25px;background:#fde19f"></div>
<div style="left:597px;top:1007px;width:57px;height:25px;background:#fde19f"></div>
<div style="left:513px;top:1007px;width:85px;height:25px;background:#fde19f"></div>
<div style="left:414px;top:1007px;width:100px;height:25px;background:#fde19f"><span class="t c"><b class="n" style="font-weight:normal">۸,۶۹<i class="z"></i>,۴۳<i class="z"></i></b></span></div>
<div style="left:362px;top:1007px;width:53px;height:25px;background:#fde19f"></div>
<div style="left:306px;top:1007px;width:57px;height:25px;background:#fde19f"></div>
<div style="left:218px;top:1007px;width:89px;height:25px;background:#fde19f"></div>
<div style="left:118px;top:1007px;width:101px;height:25px;background:#fde19f"><span class="t c"><b class="n" style="font-weight:normal">۶,۶۸۵,<i class="z"></i>۸<i class="z"></i></b></span></div>
<div style="left:35px;top:1007px;width:84px;height:25px;background:#fde19f"></div>
</div>
<div style="left:35px;top:1042px;width:1850px;height:27px;background:#0697c9"></div>
<div style="right:40px;top:1047px;font-size:13px;font-weight:bold;color:#fff;line-height:17px;white-space:nowrap;direction:rtl;transform-origin:100% 50%;transform:scaleX(0.8881);"><span id="sec2">خرید مواد اولیه</span></div>
<div style="left:35px;top:1075px;width:1850px;height:10px;background:#0697c9"></div>
<div style="left:304px;top:1075px;width:1px;height:10px;background:#7fcdec"></div>
<div style="left:717px;top:1075px;width:1px;height:10px;background:#7fcdec"></div>
<div style="left:967px;top:1075px;width:1px;height:10px;background:#7fcdec"></div>
<div style="left:1263px;top:1075px;width:1px;height:10px;background:#7fcdec"></div>
<div style="left:1476px;top:1075px;width:1px;height:10px;background:#7fcdec"></div>
<div style="left:1723px;top:1075px;width:1px;height:10px;background:#7fcdec"></div>
<div style="left:1755px;top:1075px;width:1px;height:10px;background:#7fcdec"></div>
<div style="left:960px;top:535px;width:0;height:0"><div style="left:-400px;top:-60px;width:800px;height:120px;transform:rotate(-46deg);font-size:98px;line-height:120px;font-weight:bold;color:#5a5a5a;opacity:0.09;text-align:center;white-space:nowrap"><span style="display:inline-block;width:72px;text-align:center;font-size:1.1em;line-height:1;vertical-align:-4px;font-weight:normal;-webkit-text-stroke:3px currentColor;position:relative;left:-3px">©</span>Codal360.ir</div></div>
</body></html>
